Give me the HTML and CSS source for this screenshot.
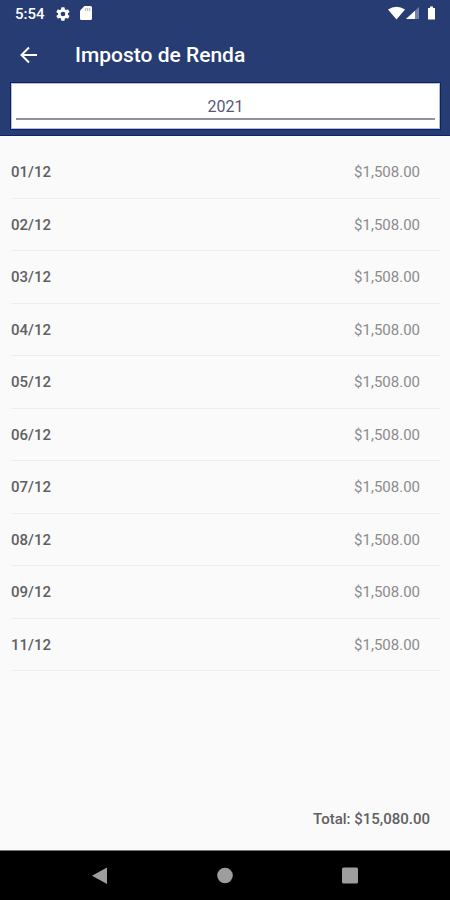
FILE: index.html
```html
<!DOCTYPE html>
<html lang="pt-BR">
<head>
<meta charset="utf-8">
<meta name="viewport" content="width=device-width, initial-scale=1">
<title>Imposto de Renda</title>
<link rel="stylesheet" href="styles.css">
</head>
<body>
<div class="screen">
  <header class="header">
    <div class="status">
      <span class="clock">5:54</span>
      <svg class="gear" width="16" height="16" viewBox="0 0 24 24" aria-hidden="true"><path fill="#fff" fill-rule="evenodd" d="M19.4 13a7.500 7.500 0 0 0 0-2l2.100-1.600a.5.5 0 0 0 .1-.6l-2-3.500a.5.5 0 0 0-.6-.2l-2.500 1a7.300 7.300 0 0 0-1.700-1l-.4-2.600a.5.500 0 0 0-.5-.5h-4a.5.5 0 0 0-.5.500L9 5.100a7.300 7.300 0 0 0-1.700 1l-2.500-1a.5.5 0 0 0-.6.2l-2 3.500a.5.5 0 0 0 .1.600L4.500 11a7.500 7.500 0 0 0 0 2l-2.200 1.600a.5.5 0 0 0-.1.600l2 3.500c.1.200.4.300.6.200l2.500-1a7.300 7.300 0 0 0 1.700 1l.4 2.600c0 .3.200.5.500.5h4c.3 0 .5-.2.500-.5l.4-2.600a7.300 7.300 0 0 0 1.700-1l2.500 1c.2.100.5 0 .6-.2l2-3.500a.5.5 0 0 0-.1-.6zM12 15.500a3.500 3.500 0 1 1 0-7 3.500 3.500 0 0 1 0 7z"/></svg>
      <svg class="card" width="12" height="15" viewBox="0 0 12 15" aria-hidden="true"><path fill="#fff" d="M4.500 0H10.500Q12 0 12 1.500V12.500Q12 14 10.500 14H1.500Q0 14 0 12.500V4.500z"/><path fill="#b9c0d3" d="M5 2h1.300v3H5zM7 2h1.300v3H7zM9 2h1.300v3H9z"/></svg>
      <svg class="signals" width="48" height="16" viewBox="0 0 48 16" aria-hidden="true"><path fill="#fff" d="M0 3.500Q8.500-2 17 3.500L8.500 13.500z"/><path fill="#7382a8" d="M31 1V13H18z"/><path fill="#fff" d="M27 4.700V13H18z"/><path fill="#fff" d="M40 2h2V.5h3V2h2v11.500h-7z"/></svg>
    </div>
    <div class="toolbar">
      <button class="back" type="button" aria-label="Voltar">
        <svg width="18" height="18" viewBox="0 0 18 18" aria-hidden="true"><path d="M17 9H2M9 1.500L1.500 9L9 16.500" fill="none" stroke="#fff" stroke-width="2"/></svg>
      </button>
      <h1 class="title">Imposto de Renda</h1>
    </div>
    <div class="year-box"><input class="year" type="text" value="2021" aria-label="Ano"></div>
  </header>
  <main class="content">
    <table class="months">
      <tbody>
        <tr><th scope="row">01/12</th><td>$1,508.00</td></tr>
        <tr><th scope="row">02/12</th><td>$1,508.00</td></tr>
        <tr><th scope="row">03/12</th><td>$1,508.00</td></tr>
        <tr><th scope="row">04/12</th><td>$1,508.00</td></tr>
        <tr><th scope="row">05/12</th><td>$1,508.00</td></tr>
        <tr><th scope="row">06/12</th><td>$1,508.00</td></tr>
        <tr><th scope="row">07/12</th><td>$1,508.00</td></tr>
        <tr><th scope="row">08/12</th><td>$1,508.00</td></tr>
        <tr><th scope="row">09/12</th><td>$1,508.00</td></tr>
        <tr><th scope="row">11/12</th><td>$1,508.00</td></tr>
      </tbody>
    </table>
    <p class="total">Total: $15,080.00</p>
  </main>
  <nav class="navbar" aria-label="Sistema">
    <button type="button" aria-label="Voltar"><svg width="18" height="18" viewBox="0 0 18 18" aria-hidden="true"><path fill="#9e9e9e" d="M16 .500V17L1 8.750z"/></svg></button>
    <button type="button" aria-label="Início"><svg width="18" height="18" viewBox="0 0 18 18" aria-hidden="true"><circle cx="9" cy="8.500" r="7.800" fill="#9e9e9e"/></svg></button>
    <button type="button" aria-label="Recentes"><svg width="18" height="18" viewBox="0 0 18 18" aria-hidden="true"><rect x="1" y=".5" width="16" height="16" rx="1.500" fill="#9e9e9e"/></svg></button>
  </nav>
</div>
</body>
</html>
```
FILE: styles.css
```css
* {
  box-sizing: border-box;
}

body {
  margin: 0;
  font-family: Roboto, "Liberation Sans", sans-serif;
  background: #fafafa;
}

button {
  display: flex;
  padding: 0;
  border: 0;
  background: none;
}

.screen {
  display: flex;
  flex-direction: column;
  min-height: 100vh;
}

.header {
  padding-bottom: 6px;
  background: #273c72;
  border-bottom: 1px solid #0b2760;
  color: #fff;
}

.status {
  display: flex;
  align-items: center;
  height: 27px;
  padding: 0 14px 0 15px;
}

.clock {
  font-size: 15px;
  font-weight: 500;
  line-height: 20px;
}

.gear {
  margin-left: 10px;
}

.card {
  margin-left: 9px;
}

.signals {
  margin-left: auto;
}

.toolbar {
  display: flex;
  align-items: center;
  height: 56px;
  padding-left: 20px;
}

.title {
  margin: 0 0 0 37px;
  font-size: 21px;
  font-weight: 500;
  line-height: 28px;
}

.year-box {
  margin: 0 10px 0 11px;
  padding: 4px 4px 8px;
  background: #fff;
  border: 1px solid #b4bfdd;
  outline: 1px solid #0b2168;
}

.year {
  display: block;
  width: 100%;
  height: 32px;
  padding: 6px 0 0;
  border: 0;
  border-bottom: 2px solid #9092a2;
  background: none;
  color: #55597a;
  font: 400 16px/20px Roboto, "Liberation Sans", sans-serif;
  text-align: center;
}

.content {
  display: flex;
  flex: 1;
  flex-direction: column;
  padding: 10px 10px 21px 11px;
}

.months {
  width: 100%;
  border-collapse: separate;
  border-spacing: 0;
  font-size: 15px;
  line-height: 20px;
}

.months th,
.months td {
  height: 53px;
  padding: 0;
  border-bottom: 1px solid #eee;
}

.months tr:nth-child(even) > * {
  height: 52px;
}

.months th {
  color: #606060;
  font-weight: 500;
  text-align: left;
}

.months td {
  padding-right: 20px;
  color: #8c8c8c;
  text-align: right;
}

.total {
  margin: auto 10px 0 0;
  color: #606060;
  font-size: 15px;
  font-weight: 500;
  line-height: 20px;
  text-align: right;
}

.navbar {
  display: flex;
  align-items: center;
  justify-content: center;
  gap: 107px;
  height: 50px;
  border-top: 1px solid #777;
  background: #000;
}
```
